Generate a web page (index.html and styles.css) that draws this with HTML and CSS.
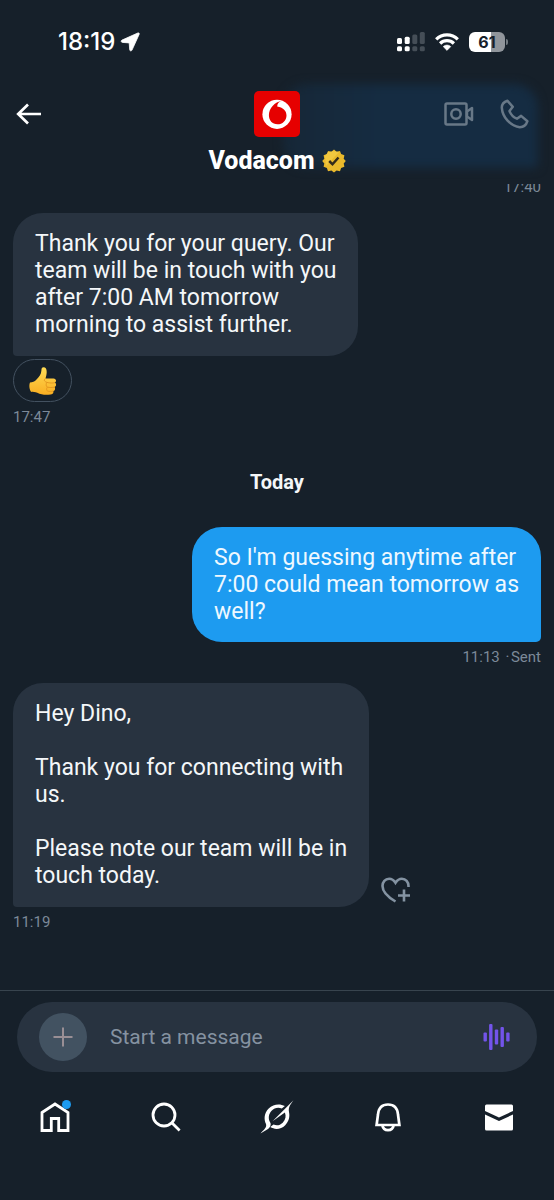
FILE: index.html
```html
<!DOCTYPE html>
<html lang="en">
<head>
<meta charset="utf-8">
<meta name="viewport" content="width=device-width, initial-scale=1">
<title>Vodacom</title>
<link rel="stylesheet" href="styles.css">
</head>
<body>
<header class="top">
  <div class="blurred" aria-hidden="true"></div>
  <div class="status">
    <div class="clock">18:19
      <svg width="20" height="20" viewBox="0 0 20 20"><path d="M17.800 1 2 8.100c-1.200.6-1 2.200.4 2.300l6.800.5.500 6.800c.1 1.400 1.700 1.600 2.300.4L19.200 2.200c.4-.9-.4-1.600-1.400-1.200Z" fill="#fff" stroke="#fff" stroke-width=".8"/></svg>
    </div>
    <div class="indicators">
      <svg width="28" height="20" viewBox="0 0 28 20"><g fill="#fff"><rect y="6" width="5" height="6" rx="1.500"/><rect x="7.700" y="4.800" width="5" height="7.200" rx="1.500"/><rect y="14.300" width="5" height="5" rx="1.500"/><rect x="7.700" y="14.300" width="5" height="5" rx="1.500"/></g><g fill="#454e57"><rect x="15.300" y="2.500" width="5" height="9.500" rx="1.500"/><rect x="22.800" y="0" width="5" height="12" rx="1.500"/><rect x="15.300" y="14.300" width="5" height="5" rx="1.500"/><rect x="22.800" y="14.300" width="5" height="5" rx="1.500"/></g></svg>
      <svg width="24" height="20" viewBox="0 0 24 20"><g fill="none" stroke="#fff" stroke-width="3.200"><path d="M1.200 7.300a15.300 15.300 0 0 1 21.600 0"/><path d="M5.100 11.500a9.800 9.800 0 0 1 13.800 0"/></g><path d="M8.200 14.600a5.400 5.400 0 0 1 7.600 0L12 18.400Z" fill="#fff" stroke="#fff" stroke-width=".6" stroke-linejoin="round"/></svg>
      <div class="battery"><span class="battery-level">61</span></div>
    </div>
  </div>
  <div class="bar">
    <button class="icon-button" aria-label="Back"><svg width="26" height="22" viewBox="0 0 26 22" fill="none" stroke="#fff" stroke-width="2.700"><path d="M25 11H2M12 1.500 2.200 11l9.800 9.500"/></svg></button>
    <div class="logo"><svg width="46" height="46" viewBox="0 0 46 46"><rect width="46" height="46" rx="5" fill="#e60000"/><circle cx="23" cy="23.300" r="14.600" fill="#fff"/><path d="M28.200 9.800c-3.200.8-5 2.900-5 5.600 5.600.8 9.300 4 9.300 9 0 5.200-4 8.800-9 8.800-5.300 0-8.600-4-8.600-9 0-6.500 5.500-13.200 13.300-14.400Z" fill="#e60000"/></svg></div>
    <div class="calls">
      <button class="icon-button" aria-label="Video call"><svg width="30" height="24" viewBox="0 0 30 24" fill="none" stroke="#687887" stroke-width="2.500" stroke-linejoin="round"><rect x="1.500" y="1.500" width="21" height="21" rx="1.500"/><circle cx="12" cy="12" r="4.700"/><path d="M23 9.500 28 6v12l-5-3.500Z"/></svg></button>
      <button class="icon-button" aria-label="Audio call"><svg width="29" height="30" viewBox="0 0 29 30" fill="none" stroke="#687887" stroke-width="2.500" stroke-linejoin="round"><path d="m7.500 1.800 5.300 6-3.300 4.300c1.500 3.800 4 6.300 7.400 7.600l4.200-2.800 6.300 5.300c-1.200 4-3.800 6-7.600 6C10.500 27 2.500 18.500 1.800 8.600c0-3.300 2.200-5.600 5.700-6.800Z"/></svg></button>
    </div>
  </div>
  <h1 class="name">Vodacom <svg width="24" height="24" viewBox="0 0 24 24"><path d="m12 .5 2.600 2.200L18 2l1.100 3.100 3.300 1.200-.7 3.400L23.800 12l-2.100 2.500.7 3.300-3.300 1.200L18 22.200l-3.400-.8L12 23.500l-2.600-2.100-3.400.8L4.900 19l-3.300-1.200.7-3.300L.2 12l2.100-2.300-.7-3.400 3.300-1.200L6 2l3.400.7Z" fill="#e9b92c"/><path d="M3 7 6 3l6-1 5 1L4 17Z" fill="#f7d450" opacity=".55"/><path d="m7.200 12 3.300 3.300 6-6.800" fill="none" stroke="#332b1b" stroke-width="2.500"/></svg></h1>
</header>

<main class="chat">
  <time class="stamp sent">17:40</time>
  <p class="bubble received first">Thank you for your query. Our<br>team will be in touch with you<br>after 7:00 AM tomorrow<br>morning to assist further.</p>
  <button class="reaction" aria-label="Thumbs up"><svg width="28" height="28" viewBox="0 0 28 28"><defs><linearGradient id="skin" x2="0" y2="1"><stop stop-color="#ffdc55"/><stop offset="1" stop-color="#f9ae22"/></linearGradient></defs><path d="M1 15.500c2.500 0 4.500-.8 6.500-3 2.600-2.800 4.700-5 4.900-9C12.500 1 13 .3 14.500.3c2.300 0 3.200 2 3.200 4.800 0 2.500-.7 4.800-1.200 6.300h8c2.500 0 3.400 3 1.500 4.200 1.700 1.500 1.300 3.500-.4 4.500 1 1.600.4 3.300-1.300 4 .5 2-.7 3.200-2.800 3.400-5 .5-9.500.2-13.200-1.800-2-.8-4.500-.5-6.300-.9C.2 22-.1 18 1 15.500Z" fill="url(#skin)"/><path d="M26 15.600c-2.500.7-5.500.5-8-.2m7.600 4.700c-2.600.6-5 .5-7.300 0m6 4c-2 .5-4 .4-5.800 0M16.500 11.400c-1.800 1.500-1.600 3 1.500 4-1.500 2-1 3.500.3 4.700-1 1.500-.8 3 .2 4" fill="none" stroke="#e0901c" stroke-width=".8"/></svg></button>
  <time class="stamp">17:47</time>
  <h2 class="day">Today</h2>
  <p class="bubble own">So I'm guessing anytime after<br>7:00 could mean tomorrow as<br>well?</p>
  <div class="stamp sent"><time>11:13</time> <span class="sent-state">·&#8202;Sent</span></div>
  <div class="row">
    <p class="bubble received">Hey Dino,<br><br>Thank you for connecting with<br>us.<br><br>Please note our team will be in<br>touch today.</p>
    <button class="icon-button react" aria-label="Add reaction"><svg width="29" height="26" viewBox="0 0 29 26" fill="none" stroke="#8493a2" stroke-width="2.600"><path d="M14.500 24.500C6 19.500 1.500 14.500 1.500 9c0-4 2.700-7.200 6.600-7.200 2.700 0 4.700 1.400 6.400 4 1.700-2.600 3.700-4 6.400-4 3.900 0 6.600 3.200 6.600 7.200v1M23 12.500v12M17 18.500h12"/></svg></button>
  </div>
  <time class="stamp">11:19</time>
</main>

<footer class="bottom">
  <form class="composer">
    <button type="button" class="add" aria-label="Add attachment"><svg width="20" height="20" viewBox="0 0 20 20" fill="none" stroke="#998f95" stroke-width="2"><path d="M10 .5v19M.5 10h19"/></svg></button>
    <input class="field" type="text" placeholder="Start a message" aria-label="Start a message">
    <button type="button" class="icon-button" aria-label="Record voice message"><svg width="28" height="28" viewBox="0 0 28 28" fill="#7354ea"><rect x="0.500" y="9.500" width="3.400" height="9" rx="1"/><rect x="6.100" y="1" width="3.400" height="26" rx="1"/><rect x="11.800" y="6.500" width="3.400" height="15" rx="1"/><rect x="17.500" y="4" width="3.400" height="20" rx="1"/><rect x="23.200" y="9.500" width="3.400" height="9" rx="1"/></svg></button>
  </form>
  <nav class="tabs" aria-label="Main">
    <a class="tab" href="#home" aria-label="Home"><svg width="32" height="32" viewBox="0 0 32 32" fill="none" stroke="#fff" stroke-width="2.800"><path d="M3 11.500 16 3l13 8.500V29.500h-9.300V17.500h-7.400v12H3Z"/></svg><span class="dot"></span></a>
    <a class="tab" href="#search" aria-label="Search"><svg width="32" height="32" viewBox="0 0 32 32" fill="none" stroke="#fff" stroke-width="2.800"><circle cx="14" cy="14" r="11"/><path d="m21.800 21.800 7.800 7.700"/></svg></a>
    <a class="tab" href="#grok" aria-label="Grok"><svg width="36" height="36" viewBox="0 0 36 36" fill="#fff"><path d="M1.500 34.500C5 30.500 8 28.500 7 25 4.800 20.500 5 14.200 9.700 9.600c4.500-4.500 11-5.300 16.200-2.500l-3.100 2.400c-3.700-1.500-7.500-.6-10.200 2.200-3.100 3.200-3.700 7.900-1.400 11.800 1.300 2.200-.2 4.700-1.800 6.200Z"/><path d="M13.500 22.300 34.500 1.300c-3 4.300-5.400 6.700-4.500 11.800 1.100 5.300-.4 9.700-3.800 13.100-4.300 4.300-10.300 4.800-15 1.900l3.300-2.600c3.300 1.500 6.500.8 9.200-1.800 3-3 3.600-6.700 2.200-10.200Z"/></svg></a>
    <a class="tab" href="#notifications" aria-label="Notifications"><svg width="32" height="32" viewBox="0 0 32 32" fill="none" stroke="#fff" stroke-width="2.700"><path d="M4.600 24 6 13.500C6.600 6.800 10.500 3.500 16 3.500s9.400 3.300 10 10L27.400 24ZM10.200 24c.7 3.500 2.800 5.200 5.800 5.200s5.100-1.700 5.800-5.200"/></svg></a>
    <a class="tab" href="#messages" aria-label="Messages"><svg width="32" height="32" viewBox="0 0 32 32" fill="#fff"><path d="M3.500 3.500h25q1.500 0 1.500 1.500v5L16 16.500 2 10V5q0-1.500 1.500-1.500Z"/><path d="M2 13.500 16 20l14-6.500V28q0 1.500-1.500 1.500h-25Q2 29.500 2 28Z"/></svg></a>
  </nav>
</footer>
</body>
</html>
```

FILE: styles.css
```css
* { box-sizing: border-box; margin: 0; }

body {
  display: flex;
  flex-direction: column;
  height: 100vh;
  background: #16202a;
  color: #f4f7f9;
  font-family: Roboto, "Noto Sans", sans-serif;
  font-size: 23px;
  line-height: 27px;
}

button { border: 0; padding: 0; background: none; color: inherit; font: inherit; }
svg { display: block; }

.icon-button { display: flex; align-items: center; justify-content: center; }

.top {
  position: relative;
  flex: none;
  display: flex;
  flex-direction: column;
  padding: 28px 16px 10px;
}

.top > * { position: relative; }

.top .blurred {
  position: absolute;
  right: 16px;
  bottom: 16px;
  width: 46%;
  height: 84px;
  border-radius: 24px 24px 4px 24px;
  background: linear-gradient(90deg, #162737, #152c42 40%);
  filter: blur(5px);
}

.status {
  display: flex;
  justify-content: space-between;
  padding: 0 33px 0 42px;
}

.clock {
  display: flex;
  align-items: center;
  gap: 5px;
  font-family: Inter, sans-serif;
  font-size: 24px;
  font-weight: 500;
  color: #fff;
}

.indicators { display: flex; align-items: center; gap: 10px; }

.battery {
  position: relative;
  width: 36px;
  height: 20px;
  border-radius: 6px;
  background: linear-gradient(90deg, #fff 61%, #90959b 61%);
  color: #16202a;
  font: 700 16px/20px Inter, sans-serif;
  text-align: center;
}

.battery::after {
  content: "";
  position: absolute;
  right: -3px;
  top: 7px;
  width: 2px;
  height: 6px;
  border-radius: 0 2px 2px 0;
  background: #717980;
}

.bar {
  display: grid;
  grid-template-columns: 1fr auto 1fr;
  align-items: center;
  margin-top: 36px;
}

.bar > .icon-button { justify-self: start; }
.calls { display: flex; align-items: center; gap: 26px; justify-self: end; padding-right: 9px; }

.name {
  display: flex;
  align-items: center;
  justify-content: center;
  gap: 7px;
  margin-top: 10px;
  font-size: 25px;
  line-height: 27px;
  font-weight: 800;
  color: #fff;
}

.chat {
  flex: 1;
  min-height: 0;
  display: flex;
  flex-direction: column;
  align-items: flex-start;
  justify-content: flex-end;
  overflow: hidden;
  padding: 0 13px 58px;
}

.stamp {
  flex: none;
  margin-top: 5px;
  color: #7c8998;
  font-size: 15px;
  line-height: 20px;
}

.sent { align-self: flex-end; }
.sent-state { margin-left: 2px; }

.bubble {
  flex: none;
  padding: 17px 22px 18px;
  border-radius: 30px;
}

.received { background: #283340; border-bottom-left-radius: 4px; }
.first { margin-top: 16px; }

.own {
  align-self: flex-end;
  padding-bottom: 17px;
  background: #1d9bf0;
  color: #eef8ff;
  border-bottom-right-radius: 5px;
}

.reaction {
  flex: none;
  display: flex;
  align-items: center;
  justify-content: center;
  width: 59px;
  height: 43px;
  margin-top: 3px;
  border: 1px solid #435160;
  border-radius: 22px;
}

.day {
  flex: none;
  align-self: center;
  margin: 42px 0 31px;
  font-size: 20px;
  line-height: 27px;
  font-weight: 700;
}

.row { flex: none; display: flex; align-items: flex-end; gap: 12px; margin-top: 16px; }
.react { margin-bottom: 4px; }

.bottom { flex: none; border-top: 1px solid #38444e; }

.composer {
  display: flex;
  align-items: center;
  height: 70px;
  margin: 11px 17px 0;
  padding: 0 26px 0 22px;
  border-radius: 35px;
  background: #283340;
}

.add {
  flex: none;
  display: flex;
  align-items: center;
  justify-content: center;
  width: 48px;
  height: 48px;
  border-radius: 50%;
  background: #425261;
}

.field {
  flex: 1;
  min-width: 0;
  padding: 0 23px;
  border: 0;
  outline: 0;
  background: none;
  color: #f4f7f9;
  font: inherit;
  font-size: 21px;
}

.field::placeholder { color: #8592a1; opacity: 1; }

.tabs { display: grid; grid-template-columns: repeat(5, 1fr); padding: 27px 0 65px; }

.tab { position: relative; display: flex; justify-content: center; align-items: center; height: 36px; }

.dot {
  position: absolute;
  top: 1px;
  left: calc(50% + 7px);
  width: 9px;
  height: 9px;
  border-radius: 50%;
  background: #1d9bf0;
}
```
